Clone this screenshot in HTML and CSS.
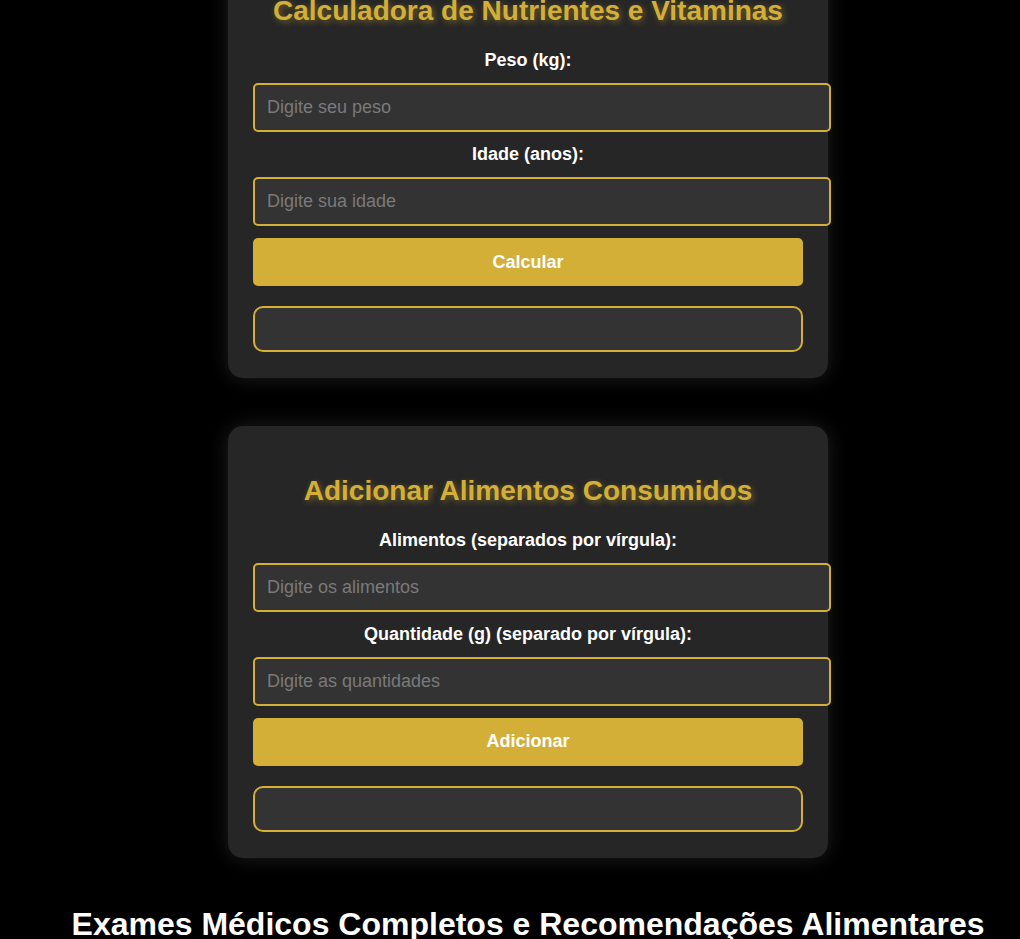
FILE: index.html
```html
<!DOCTYPE html>
<html lang="pt-BR">
<head>
    <meta charset="UTF-8">
    <meta name="viewport" content="width=device-width, initial-scale=1.0">
    <title>Calculadora de Nutrientes</title>
    <link rel="stylesheet" href="styles.css">
</head>
<body>
    <div class="page">
        <div class="card">
            <h2>Calculadora de Nutrientes e Vitaminas</h2>
            <label for="peso">Peso (kg):</label>
            <input type="number" id="peso" placeholder="Digite seu peso">
            <label for="idade">Idade (anos):</label>
            <input type="number" id="idade" placeholder="Digite sua idade">
            <button>Calcular</button>
            <div class="resultado"></div>
        </div>

        <div class="card">
            <h2>Adicionar Alimentos Consumidos</h2>
            <label for="alimentos">Alimentos (separados por vírgula):</label>
            <input type="text" id="alimentos" placeholder="Digite os alimentos">
            <label for="quantidades">Quantidade (g) (separado por vírgula):</label>
            <input type="text" id="quantidades" placeholder="Digite as quantidades">
            <button>Adicionar</button>
            <div class="resultado"></div>
        </div>

        <h1>Exames Médicos Completos e Recomendações Alimentares</h1>
    </div>
</body>
</html>
```

FILE: styles.css
```css
body {
    font-family: "Liberation Sans", Arial, sans-serif;
    background: #000;
    color: #f5f5f5;
    margin: 0;
}
.page {
    margin-top: -101px;
    padding-left: 36px;
}
.card {
    background: #262626;
    width: 550px;
    padding: 25px 25px 26px;
    margin: 48px auto;
    border-radius: 15px;
    box-shadow: 0 0 20px rgba(255, 255, 255, 0.12);
    text-align: center;
}
.card h2 {
    font-size: 28px;
    color: #d4af37;
    text-shadow: 2px 2px 6px rgba(212, 175, 55, 0.45);
}
.card label {
    display: block;
    font-size: 18px;
    font-weight: bold;
    color: #fff;
}
.card input {
    display: block;
    width: 100%;
    margin: 12px 0;
    padding: 12px;
    font-family: inherit;
    font-size: 18px;
    color: #fff;
    background: #333;
    border: 2px solid #d4af37;
    border-radius: 5px;
}
.card input::placeholder {
    color: #7a7a7a;
}
.card button {
    display: block;
    width: 100%;
    height: 48px;
    font-family: inherit;
    font-size: 18px;
    font-weight: bold;
    color: #fff;
    background: #d4af37;
    border: none;
    border-radius: 5px;
    cursor: pointer;
}
.resultado {
    margin-top: 20px;
    padding: 21px;
    background: #333;
    border: 2px solid #d4af37;
    border-radius: 10px;
}
h1 {
    font-size: 32px;
    color: #fff;
    text-align: center;
}
```
